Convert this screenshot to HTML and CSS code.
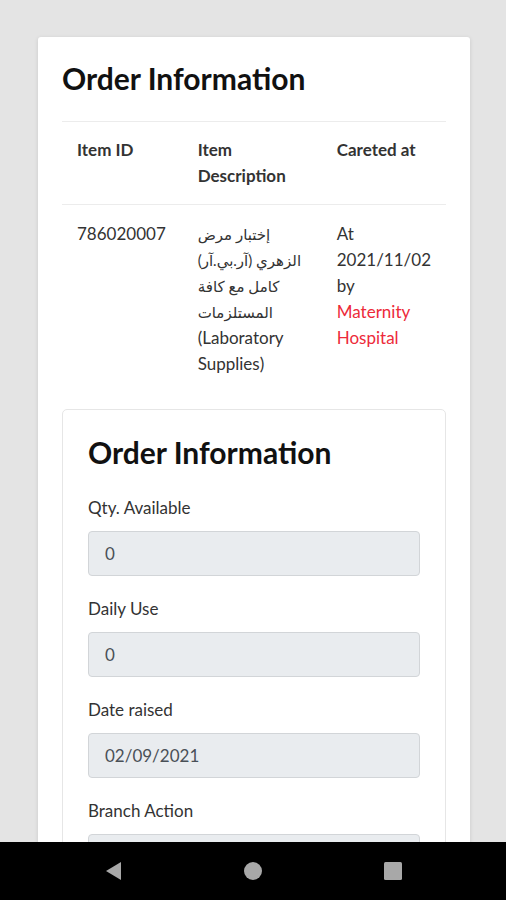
FILE: index.html
```html
<!DOCTYPE html>
<html lang="en">
<head>
    <meta charset="UTF-8">
    <meta name="viewport" content="width=device-width, initial-scale=1.0">
    <title>Order Information</title>
    <link rel="stylesheet" href="styles.css">
</head>
<body>
    <div class="page-card">
        <h2 class="card-title">Order Information</h2>
        <table class="order-table">
            <thead>
                <tr>
                    <th class="col-id">Item ID</th>
                    <th class="col-desc">Item Description</th>
                    <th class="col-created">Careted at</th>
                </tr>
            </thead>
            <tbody>
                <tr>
                    <td>786020007</td>
                    <td class="desc"><span class="ar">إختبار مرض<br>الزهري (آر.بي.آر)<br>كامل مع كافة<br>المستلزمات</span><br>(Laboratory<br>Supplies)</td>
                    <td>At<br>2021/11/02<br>by<br><span class="branch">Maternity Hospital</span></td>
                </tr>
            </tbody>
        </table>

        <div class="form-card">
            <h2 class="card-title">Order Information</h2>
            <div class="form-group">
                <label for="qty">Qty. Available</label>
                <input type="text" id="qty" value="0" readonly>
            </div>
            <div class="form-group">
                <label for="dailyUse">Daily Use</label>
                <input type="text" id="dailyUse" value="0" readonly>
            </div>
            <div class="form-group">
                <label for="dateRaised">Date raised</label>
                <input type="text" id="dateRaised" value="02/09/2021" readonly>
            </div>
            <div class="form-group">
                <label for="branchAction">Branch Action</label>
                <input type="text" id="branchAction" value="" readonly>
            </div>
        </div>
    </div>

    <div class="nav-bar">
        <svg width="20" height="20" viewBox="0 0 20 20"><polygon points="3,10 18,1 18,19" fill="#a8a8a8"/></svg>
        <svg width="20" height="20" viewBox="0 0 20 20"><circle cx="10" cy="10" r="9" fill="#a8a8a8"/></svg>
        <svg width="20" height="20" viewBox="0 0 20 20"><rect x="1" y="1" width="18" height="18" rx="1.5" fill="#a8a8a8"/></svg>
    </div>
</body>
</html>
```

FILE: styles.css
```css
body {
    margin: 0;
    background-color: #e4e4e4;
    font-family: Lato, "DejaVu Sans", sans-serif;
    color: #212529;
}

.page-card {
    background-color: white;
    margin: 37px 36px 0 38px;
    padding: 24px 24px 200px 24px;
    border-radius: 3px;
    box-shadow: 0 1px 4px rgba(0,0,0,0.12);
}

.card-title {
    margin: 0;
    font-size: 30px;
    line-height: 34px;
    font-weight: 700;
    color: #111;
}

.order-table {
    width: 100%;
    margin-top: 26px;
    border-collapse: collapse;
    font-size: 17px;
    line-height: 26px;
}

.order-table th,
.order-table td {
    text-align: left;
    vertical-align: top;
    padding: 15px;
    border-top: 1px solid #ececec;
}

.order-table th {
    font-weight: 700;
    color: #333;
}

.order-table td {
    padding-top: 16px;
    color: #333;
}

.col-id {
    width: 91px;
}

.col-desc {
    width: 110px;
}

.desc {
    color: #444;
    white-space: nowrap;
}

.ar {
    font-size: 15px;
}

.branch {
    color: #ed2a3a;
}

.form-card {
    margin-top: 17px;
    border: 1px solid #e6e6e6;
    border-radius: 5px;
    padding: 25px 25px 20px 25px;
}

.form-card .card-title {
    margin-bottom: 27px;
}

.form-group {
    margin-bottom: 21px;
}

label {
    display: block;
    font-size: 17px;
    line-height: 24px;
    margin-bottom: 11px;
    color: #333;
}

input {
    display: block;
    width: 100%;
    height: 45px;
    box-sizing: border-box;
    padding: 0 16px;
    border: 1px solid #d2d5d8;
    border-radius: 4px;
    background-color: #e9ecef;
    font-family: Lato, "DejaVu Sans", sans-serif;
    font-size: 17px;
    color: #495057;
}

input:focus {
    outline: none;
}

.nav-bar {
    position: fixed;
    left: 0;
    right: 0;
    bottom: 0;
    height: 58px;
    background-color: black;
    display: flex;
    justify-content: space-between;
    align-items: center;
    padding: 0 103px;
}
```
